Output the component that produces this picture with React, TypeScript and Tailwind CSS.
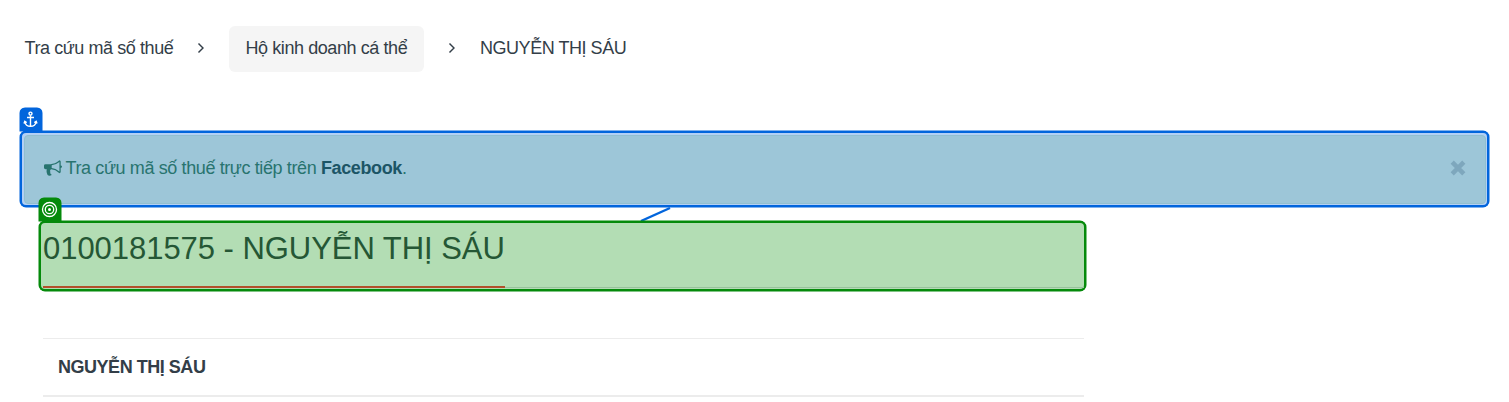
import React from "react";

function Chevron() {
  return (
    <svg width="8" height="12" viewBox="0 0 8 12" fill="none" stroke="#333e48" strokeWidth="1.4" className="shrink-0">
      <path d="M1.5 1.4 6 6 1.5 10.6" />
    </svg>
  );
}

function Bullhorn() {
  return (
    <svg width="18" height="18" viewBox="0 0 1792 1792" fill="#28746f" className="mr-1 mb-px shrink-0">
      <path d="M1664 640q53 0 90.5 37.5t37.5 90.5-37.5 90.5-90.5 37.5v384q0 52-38 90t-90 38q-417-347-812-380-58 19-91 66t-31 100.5 40 92.5q-20 33-23 65.5t6 58 33.5 55 48 50 61.5 50.5q-29 58-111.5 83t-168.5 11.5-132-55.5q-7-23-29.5-87.5t-32-94.5-23-89-15-101 3.5-98.5 22-110.5h-122q-66 0-113-47t-47-113v-192q0-66 47-113t113-47h480q435 0 896-384 52 0 90 38t38 90v384zm-128 604v-954q-394 302-768 343v270q377 42 768 341z" />
    </svg>
  );
}

function AnchorBadge() {
  return (
    <span className="absolute -top-[25px] -left-[2px] flex h-[23px] w-[22px] items-center justify-center rounded-t-[5px] bg-[#0265dc] pr-px shadow-[0_0_0_0.5px_#0265dc]">
      <svg width="15" height="17" viewBox="0 0 15 17" fill="none" stroke="#fff" strokeWidth="1.4">
        <circle cx="7.5" cy="2.6" r="1.5" />
        <path d="M7.5 4.2V15.2M4 6.5h7M1.8 10.8c.5 2.6 2.6 4.4 5.7 4.5 3.1-.1 5.2-1.9 5.7-4.5M1 12.6l.8-2.2 1.9 1.3M14 12.6l-.8-2.2-1.9 1.3" />
      </svg>
    </span>
  );
}

function TargetBadge() {
  return (
    <span className="absolute -top-[25px] -left-[2px] flex h-[23px] w-[22px] items-center justify-center rounded-t-[5px] bg-[#058a0b] pr-px shadow-[0_0_0_0.5px_#058a0b]">
      <svg width="17" height="17" viewBox="0 0 17 17" fill="none" stroke="#fff" strokeWidth="1.3">
        <circle cx="8.5" cy="8.5" r="7" />
        <circle cx="8.5" cy="8.5" r="4.2" />
        <circle cx="8.5" cy="8.5" r="1.5" fill="#fff" stroke="none" />
      </svg>
    </span>
  );
}

export default function App() {
  return (
    <div className="h-[402px] w-[1509px] overflow-hidden bg-white font-['Liberation_Sans',Arial,sans-serif] text-[18px] leading-[26px] tracking-[-0.42px] text-[#333e48]">
      <nav className="flex h-[98px] items-center pl-[24.5px]">
        <span className="w-[172.5px] pb-0.5 whitespace-nowrap">Tra cứu mã số thuế</span>
        <span className="pb-0.5">
          <Chevron />
        </span>
        <span className="ml-6 flex h-[46px] w-[195px] items-center rounded-md bg-[#f5f5f5] pb-0.5 pl-[16.5px] whitespace-nowrap">
          Hộ kinh doanh cá thể
        </span>
        <span className="ml-6 pb-0.5">
          <Chevron />
        </span>
        <span className="ml-6 pb-0.5 tracking-[-0.46px] whitespace-nowrap">NGUYỄN THỊ SÁU</span>
      </nav>

      <section className="relative mt-[33px] ml-5 h-[76px] w-[1469px] rounded-[6px] border-2 border-[#0265dc] bg-[#b3d0f5] pt-[2px] pr-px pb-px pl-[2px] shadow-[0_0_0_0.5px_#0265dc]">
        <AnchorBadge />
        <div className="flex h-full items-center rounded-[4px] border border-[#91bfd0] bg-[#9dc6d8] pr-[19px] pb-[3px] pl-[18.5px] text-[#28746f]">
          <Bullhorn />
          <span className="tracking-[-0.385px] whitespace-nowrap">
            Tra cứu mã số thuế trực tiếp trên <b className="text-[#1c5566]">Facebook</b>.
          </span>
          <svg width="16" height="16" viewBox="0 0 16 16" stroke="#7ea7bd" strokeWidth="4.5" className="ml-auto">
            <path d="m2.2 2.2 11.6 11.6M13.8 2.2 2.2 13.8" />
          </svg>
        </div>
        <svg width="32" height="16" viewBox="0 0 32 16" className="absolute top-[73px] left-[618px]">
          <path d="M1 15 30 2" stroke="#0265dc" strokeWidth="2.4" />
        </svg>
      </section>

      <section className="relative mt-[14px] ml-[39px] h-[70px] w-[1047px] rounded-[6px] border-2 border-[#058a0b] bg-[#b3ddb4] pl-[2px] shadow-[0_0_0_0.5px_#058a0b]">
        <TargetBadge />
        <div className="flex h-[65px] items-start bg-[linear-gradient(#98c19d,#98c19d)] bg-[length:100%_1px] bg-bottom bg-no-repeat">
          <h1 className="h-[65px] w-[462px] border-b-2 border-[#b34f2b] pt-2 text-[31px] leading-[36px] tracking-[-0.04px] whitespace-nowrap text-[#255735]">
            0100181575 - NGUYỄN THỊ SÁU
          </h1>
        </div>
      </section>

      <div className="mt-[47px] ml-[43px] flex h-[59px] w-[1041px] items-center border-t border-b-2 border-[#ececec] pl-[15px] font-bold tracking-[-0.47px]">
        NGUYỄN THỊ SÁU
      </div>
    </div>
  );
}
